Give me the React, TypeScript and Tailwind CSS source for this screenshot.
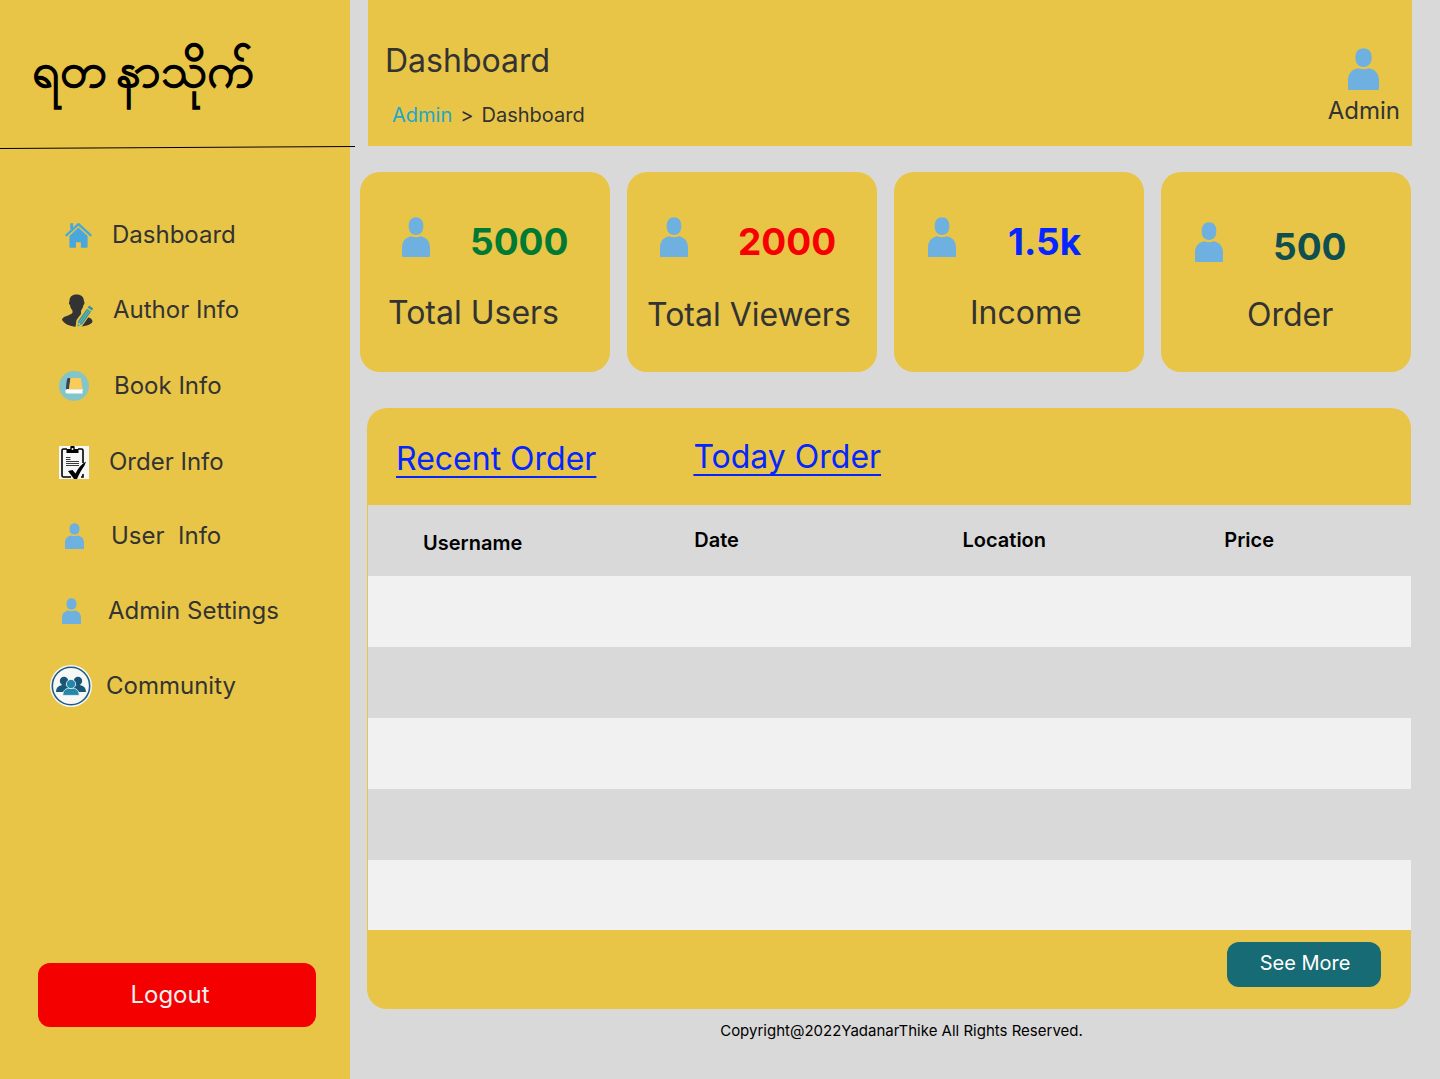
import type { ReactNode } from 'react';

function Person({ className }: { className: string }) {
  return (
    <svg viewBox="0 0 30 40" preserveAspectRatio="none" className={className} fill="#6eb0e0" aria-hidden="true">
      <path d="M15 .3c4.600 0 7.800 3.400 7.800 7.700v2c0 4.400-3.200 8-7.800 8s-7.800-3.600-7.800-8V8C7.200 3.700 10.400.3 15 .3z" />
      <path d="M10 19.200c1.500.700 3.200 1.100 5 1.100s3.500-.4 5-1.100c5.800.700 10 5.200 10 11v8.600c0 .800-.4 1.200-1.200 1.200H1.200C.4 40 0 39.600 0 38.800v-8.600c0-5.800 4.200-10.300 10-11z" />
    </svg>
  );
}

function HomeIcon() {
  return (
    <svg viewBox="0 0 27 26" className="h-[26px] w-[27px]" fill="#48a7dd" aria-hidden="true">
      <path d="M5.200 1.200h2.900v6H5.200z" />
      <path d="M1.500 13.200 13.500 2.200l12 11" fill="none" stroke="#48a7dd" strokeWidth="2.400" strokeLinecap="round" strokeLinejoin="round" />
      <path d="M13.500 5.600 4.400 14v10.500c0 .8.400 1.200 1.200 1.200h5.300v-5.500h5v5.500h5.500c.8 0 1.200-.4 1.200-1.200V14z" />
    </svg>
  );
}

function AuthorIcon() {
  return (
    <svg viewBox="0 0 31 33" className="h-[33px] w-[31px]" aria-hidden="true">
      <path
        fill="#333"
        d="M14.500.5c4.700 0 7.500 2.500 7.500 7 .9.600.6 3-.5 3.600-.5 3-1.800 4.700-2.500 5.700v2.700c1 2.200 6 2.700 9 4.500 1.700 1 2.500 2.200 2.500 3.500C30 31 21 32.800 15 32.800S3 30.500 0 26c.2-1.300.7-2 1.500-2.500 3-1.900 8-2.700 9-4.700v-2.300C9.500 15.500 8.500 13.800 8 11c-1.200-.6-1.400-3-.5-3.600C7.300 3 10 .5 14.500.5z"
      />
      <path fill="#e8c547" d="m25.500 11 6.500 4-12.500 18h-6l1-7z" />
      <path fill="#2f94ad" d="m27.800 12 2.900 2c.4.300.5.700.2 1.100l-1 1.500-4.200-2.900 1-1.500c.3-.4.700-.5 1.100-.2z" />
      <path fill="#2f94ad" d="m25 14.700 4.100 2.900-8.700 12.300-4.900 2.600.7-5.400z" />
      <path stroke="#d8cf70" strokeWidth=".5" fill="none" d="M26.400 15.800 17.500 28.200m10.300-11.500-8.900 12.500" />
      <path fill="#e8d58a" d="m16.700 28.500 2 1.400-2.400 1.400z" />
    </svg>
  );
}

function BookIcon() {
  return (
    <svg viewBox="0 0 30 30" className="size-[30px]" aria-hidden="true">
      <circle cx="15" cy="15" r="15" fill="#84c5c9" />
      <path fill="#3b4254" d="M9.500 7h2l-1.500 11.500-3 2C7 16 7.500 10 8.200 8c.2-.7.600-1 1.300-1z" />
      <path fill="#fbcb57" d="M11.500 7h9.300c.7 0 1.200.4 1.300 1.100L23.500 18H10z" />
      <path fill="#fff" d="M8.500 18h15v4.500H8.200c-2.500 0-2.500-4.500.3-4.500z" />
      <path fill="#e4e8ea" d="M9 18h14.500v1H9z" />
    </svg>
  );
}

function ClipboardIcon() {
  return (
    <svg viewBox="0 0 30 33" className="h-[33px] w-[30px]" aria-hidden="true">
      <path fill="#f7f7f7" d="M0 0h30v33H0z" />
      <path fill="none" stroke="#000" strokeWidth="1.600" d="M8 3H4.500C3.500 3 3 3.500 3 4.500v25c0 1 .5 1.500 1.500 1.500H12m12-14V4.500C24 3.500 23.500 3 22.500 3H19m3 28h2v-3" />
      <path fill="#000" d="M7.500 3h3.800V1.300C11.300.5 11.900 0 12.700 0h1.600c.8 0 1.400.5 1.400 1.300V3h3.800v4h-12z" />
      <circle cx="13.500" cy="3" r="1" fill="#f7f7f7" />
      <path stroke="#222" strokeWidth=".9" d="M7 11.500h4.500M7 13.500h4.500M7 15.500h13M7 17.500h13M7 19.500h13" />
      <path fill="#000" d="m9 25 4.500-1 3 3.500c2.500-5 6-9.500 10.500-12l-1.500 4C22.500 24 20 28 18 33h-3z" />
    </svg>
  );
}

function CommunityIcon() {
  return (
    <svg viewBox="0 0 42 42" className="size-[42px]" aria-hidden="true">
      <circle cx="21" cy="21" r="21" fill="#f7f7f5" />
      <circle cx="21" cy="21" r="18.700" fill="none" stroke="#1d5c86" strokeWidth="1.600" />
      <g fill="#175676">
        <circle cx="14" cy="16" r="4.200" />
        <circle cx="28" cy="16" r="4.200" />
        <path d="M6 27c.3-5 3-7 8-7 3.500 0 6 1 7 3 1-2 3.500-3 7-3 5 0 7.700 2 8 7z" />
      </g>
      <g fill="#2387aa" stroke="#f7f7f5" strokeWidth=".8">
        <path d="M12.800 30.400c.2-5.400 3-7.400 8.200-7.400s8 2 8.200 7.400z" />
        <circle cx="21" cy="19" r="4.600" />
      </g>
    </svg>
  );
}

const nav: { label: string; icon: ReactNode; row: string }[] = [
  { label: 'Dashboard', icon: <HomeIcon />, row: 'h-[76px] pl-[65px] gap-5' },
  { label: 'Author Info', icon: <AuthorIcon />, row: 'h-[74px] pl-[62px] gap-5' },
  { label: 'Book Info', icon: <BookIcon />, row: 'h-[78px] pl-[59px] gap-[25px]' },
  { label: 'Order Info', icon: <ClipboardIcon />, row: 'h-[74px] pl-[59px] gap-5' },
  { label: 'User  Info', icon: <Person className="h-[26px] w-[19px]" />, row: 'h-[74px] pl-[65px] gap-[27px]' },
  { label: 'Admin Settings', icon: <Person className="h-[26px] w-[19px]" />, row: 'h-[76px] pl-[62px] gap-[27px]' },
  { label: 'Community', icon: <CommunityIcon />, row: 'h-[74px] pl-[50px] gap-3.5' },
];

const stats = [
  { value: '5000', label: 'Total Users', color: 'text-[#007a33]', card: 'pt-[45px]', top: 'pl-[42px] gap-10', name: 'pt-[26px] pl-7' },
  { value: '2000', label: 'Total Viewers', color: 'text-[#f80000]', card: 'pt-[45px]', top: 'pl-[33px] gap-[50px]', name: 'pt-7 pl-5' },
  { value: '1.5k', label: 'Income', color: 'text-[#0526ff]', card: 'pt-[45px]', top: 'pl-[34px] gap-[52px]', name: 'pt-[26px] pl-[76px]' },
  { value: '500', label: 'Order', color: 'text-[#0f4f4f]', card: 'pt-[50px]', top: 'pl-[34px] gap-[50px]', name: 'pt-[23px] pl-[86px]' },
];

export default function App() {
  return (
    <div className="flex min-h-screen bg-[#d9d9d9] font-['Inter',sans-serif] text-[#333]">
      <aside className="flex w-[350px] shrink-0 flex-col bg-[#e8c547]">
        <div className="relative h-[149px] pt-[34px] pl-8">
          <p lang="my" className="text-5xl leading-[72px] font-semibold text-black">ရတ{'\u2009'}နာသိုက်</p>
          <svg viewBox="0 0 355 4" className="absolute bottom-0 left-0 h-1 w-[355px]" aria-hidden="true">
            <path d="M0 3.500 355 1.500" stroke="#000" strokeWidth="1" />
          </svg>
        </div>
        <nav className="pt-12">
          <ul>
            {nav.map((item) => (
              <li key={item.label}>
                <a href="#" className={`flex items-center text-2xl whitespace-pre ${item.row}`}>
                  {item.icon}
                  <span>{item.label}</span>
                </a>
              </li>
            ))}
          </ul>
        </nav>
        <button className="mt-auto mb-[52px] ml-[38px] h-16 w-[278px] rounded-xl bg-[#f50000] pr-3.5 text-2xl text-[#f0f0f0]">
          Logout
        </button>
      </aside>

      <main className="flex min-w-0 flex-1 flex-col">
        <header className="mr-7 ml-[18px] flex h-[146px] justify-between bg-[#e8c547]">
          <div className="pt-[41px] pl-[17px]">
            <h1 className="text-[32px] leading-10">Dashboard</h1>
            <nav className="flex gap-2 pt-[19px] pl-[7px] text-xl leading-[30px]">
              <a href="#" className="text-[#22a7c9]">Admin</a>
              <span>&gt;</span>
              <span>Dashboard</span>
            </nav>
          </div>
          <div className="flex flex-col items-center pt-12 pr-3">
            <Person className="h-[42px] w-[31px]" />
            <span className="text-2xl leading-[42px]">Admin</span>
          </div>
        </header>

        <section className="mt-[26px] mr-[29px] ml-[10px] grid grid-cols-4 gap-[17px]">
          {stats.map((s) => (
            <article key={s.label} className={`h-[200px] rounded-[20px] bg-[#e8c547] ${s.card}`}>
              <div className={`flex h-[50px] ${s.top}`}>
                <Person className="h-10 w-7" />
                <strong className={`text-[37px] leading-[50px] font-bold ${s.color}`}>{s.value}</strong>
              </div>
              <p className={`text-[32px] leading-10 whitespace-nowrap ${s.name}`}>{s.label}</p>
            </article>
          ))}
        </section>

        <section className="mt-9 mr-[29px] ml-[17px] overflow-hidden rounded-[20px] bg-[#e8c547]">
          <div className="flex h-[97px] gap-[97px] pt-[29px] pl-[29px] text-[32px] leading-10 text-[#0526ff]">
            <a href="#" className="pt-0.5 underline decoration-2 underline-offset-[6px] [text-decoration-skip-ink:none]">Recent Order</a>
            <a href="#" className="underline decoration-2 underline-offset-[6px] [text-decoration-skip-ink:none]">Today Order</a>
          </div>
          <div className="pl-px">
            <table className="w-full table-fixed bg-[#d9d9d9] text-left text-xl text-black">
              <colgroup>
                <col className="w-[31%]" />
                <col className="w-[26%]" />
                <col className="w-[25%]" />
                <col />
              </colgroup>
              <thead>
                <tr className="h-[71px]">
                  <th className="pt-1 pl-[55px] font-semibold">Username</th>
                  <th className="pb-0.5 pl-[3px] font-semibold">Date</th>
                  <th className="pb-0.5 font-semibold">Location</th>
                  <th className="pb-0.5 pl-px font-semibold">Price</th>
                </tr>
              </thead>
              <tbody>
                {[0, 1, 2, 3, 4].map((row) => (
                  <tr key={row} className="h-[71px] odd:bg-[#f1f1f1] last:h-[70px]">
                    <td />
                    <td />
                    <td />
                    <td />
                  </tr>
                ))}
              </tbody>
            </table>
          </div>
          <div className="flex h-[79px] justify-end pt-3 pr-[30px]">
            <button className="h-[45px] w-[154px] rounded-xl bg-[#176b75] pb-1 pl-2 pr-1.5 text-xl text-white">See More</button>
          </div>
        </section>
        <footer className="pt-2.5 pl-[13px] text-center text-[15px] leading-6 text-black">
          Copyright@2022YadanarThike All Rights Reserved.
        </footer>
      </main>
    </div>
  );
}
